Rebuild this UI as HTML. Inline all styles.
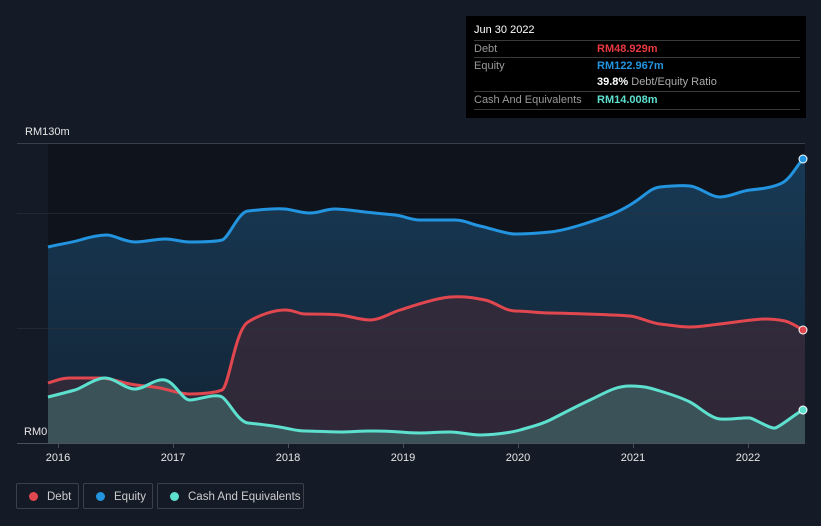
<!DOCTYPE html>
<html><head><style>
body{margin:0;background:#151b26;width:821px;height:526px;overflow:hidden;font-family:"Liberation Sans",sans-serif;position:relative}
.tt{position:absolute;left:466px;top:16px;width:340px;height:102px;background:#000;color:#fff;font-size:11px}
.tt .r{position:absolute;left:8px;width:326px;border-top:1px solid #3a3a3a;height:17px;line-height:17px;color:#999}
.tt .v{position:absolute;left:123px;font-weight:bold}
.lg{position:absolute;top:483px;height:26px;border:1px solid #3a404c;border-radius:2px;color:#ccc;font-size:11.5px;line-height:26px;box-sizing:border-box;white-space:nowrap;overflow:hidden}
.lg i{display:inline-block;width:9px;height:9px;border-radius:50%;margin:0 9px 0 12px;vertical-align:-1px}
</style></head><body>
<svg width="821" height="526" style="position:absolute;left:0;top:0">
<defs>
<linearGradient id="ge" x1="0" y1="0" x2="0" y2="1"><stop offset="0" stop-color="#1b4a6e" stop-opacity=".7"/><stop offset="1" stop-color="#163048" stop-opacity=".6"/></linearGradient>
</defs>
<rect x="48" y="143" width="757" height="300" fill="#0f141c"/>
<path d="M48,247 C60,244 70,243 80,240 S100,235 107,235 S125,242 135,242 S155,239 165,239 S180,242 190,242 S215,242 222,240 S238,212 248,211 S275,208 285,209 S300,213 310,213 S325,209 335,209 S355,211 365,212 S385,214 395,215 S410,220 420,220 S445,220 455,220 S470,224 480,226 S505,234 515,234 S540,233 550,232 S575,227 590,222 S615,214 630,205 S650,188 660,187 S680,185 690,186 S710,197 720,197 S740,191 750,190 S770,188 780,184 S795,168 803,159 L805,159 L805,443 L48,443Z" fill="url(#ge)"/>
<path d="M48,383 C58,380 62,378 70,378 S90,378 100,378 S120,382 130,384 S150,386 160,388 S180,394 190,394 S215,393 222,390 S235,330 248,322 S275,310 285,310 S298,314 305,314 S330,314 340,315 S360,320 370,320 S390,313 400,310 S435,298 450,297 S475,298 485,300 S505,311 515,311 S540,313 550,313 S620,315 630,316 S650,323 660,324 S680,327 690,327 S710,325 720,324 S755,319 765,319 S780,320 785,321 S798,327 803,330 L805,330 L805,443 L48,443Z" fill="#3a2a38" fill-opacity=".75"/>
<path d="M48,397 C60,394 68,392 75,390 S95,378 105,378 S125,389 135,389 S155,378 165,380 S182,400 190,400 S215,393 222,397 S238,422 248,423 S275,426 285,428 S298,431 305,431 S330,432 340,432 S360,431 370,431 S390,431 400,432 S412,433 420,433 S440,432 450,432 S470,435 480,435 S510,433 520,430 S540,425 550,420 S575,407 590,400 S615,386 630,386 S650,388 660,391 S682,398 690,402 S710,418 720,419 S745,417 750,418 S770,429 775,428 S795,414 803,410 L805,410 L805,443 L48,443Z" fill="#3d5a5e" fill-opacity=".85"/>
<line x1="17" y1="143.5" x2="805" y2="143.5" stroke="#3a404a"/>
<line x1="17" y1="213.5" x2="805" y2="213.5" stroke="#2a3340" stroke-opacity=".6"/>
<line x1="17" y1="328.5" x2="805" y2="328.5" stroke="#2a3340" stroke-opacity=".6"/>
<g fill="none" stroke-width="3">
<path stroke="#2394df" d="M48,247 C60,244 70,243 80,240 S100,235 107,235 S125,242 135,242 S155,239 165,239 S180,242 190,242 S215,242 222,240 S238,212 248,211 S275,208 285,209 S300,213 310,213 S325,209 335,209 S355,211 365,212 S385,214 395,215 S410,220 420,220 S445,220 455,220 S470,224 480,226 S505,234 515,234 S540,233 550,232 S575,227 590,222 S615,214 630,205 S650,188 660,187 S680,185 690,186 S710,197 720,197 S740,191 750,190 S770,188 780,184 S795,168 803,159"/>
<path stroke="#e0474f" d="M48,383 C58,380 62,378 70,378 S90,378 100,378 S120,382 130,384 S150,386 160,388 S180,394 190,394 S215,393 222,390 S235,330 248,322 S275,310 285,310 S298,314 305,314 S330,314 340,315 S360,320 370,320 S390,313 400,310 S435,298 450,297 S475,298 485,300 S505,311 515,311 S540,313 550,313 S620,315 630,316 S650,323 660,324 S680,327 690,327 S710,325 720,324 S755,319 765,319 S780,320 785,321 S798,327 803,330"/>
<path stroke="#5ee0cf" d="M48,397 C60,394 68,392 75,390 S95,378 105,378 S125,389 135,389 S155,378 165,380 S182,400 190,400 S215,393 222,397 S238,422 248,423 S275,426 285,428 S298,431 305,431 S330,432 340,432 S360,431 370,431 S390,431 400,432 S412,433 420,433 S440,432 450,432 S470,435 480,435 S510,433 520,430 S540,425 550,420 S575,407 590,400 S615,386 630,386 S650,388 660,391 S682,398 690,402 S710,418 720,419 S745,417 750,418 S770,429 775,428 S795,414 803,410"/>
</g>
<circle cx="803" cy="159" r="4" fill="#2394df" stroke="#fff"/>
<circle cx="803" cy="330" r="4" fill="#e0474f" stroke="#fff"/>
<circle cx="803" cy="410" r="4" fill="#5ee0cf" stroke="#fff"/>
<line x1="17" y1="443.5" x2="805" y2="443.5" stroke="#4a515c"/>
<g stroke="#4a515c"><line x1="58.5" y1="443" x2="58.5" y2="448"/><line x1="173.5" y1="443" x2="173.5" y2="448"/><line x1="288.5" y1="443" x2="288.5" y2="448"/><line x1="403.5" y1="443" x2="403.5" y2="448"/><line x1="518.5" y1="443" x2="518.5" y2="448"/><line x1="633.5" y1="443" x2="633.5" y2="448"/><line x1="748.5" y1="443" x2="748.5" y2="448"/></g>
<g fill="#e6e6e6" font-size="11" text-anchor="middle" font-family="Liberation Sans,sans-serif">
<text x="58" y="461">2016</text><text x="173" y="461">2017</text><text x="288" y="461">2018</text><text x="403" y="461">2019</text><text x="518" y="461">2020</text><text x="633" y="461">2021</text><text x="748" y="461">2022</text>
<text x="25" y="135" text-anchor="start">RM130m</text>
<text x="24" y="435" text-anchor="start">RM0</text>
</g>
</svg>
<div class="tt">
<div style="position:absolute;left:8px;top:8px;font-size:11px">Jun 30 2022</div>
<div class="r" style="top:24px">Debt<span class="v" style="color:#e8393f">RM48.929m</span></div>
<div class="r" style="top:41px">Equity<span class="v" style="color:#2394df">RM122.967m</span></div>
<div class="r" style="top:58px;border-top:none"><span class="v" style="color:#fff">39.8% <span style="color:#aaa;font-weight:normal">Debt/Equity Ratio</span></span></div>
<div class="r" style="top:75px">Cash And Equivalents<span class="v" style="color:#5ee0cf">RM14.008m</span></div>
<div class="r" style="top:93px;height:0"></div>
</div>
<div class="lg" style="left:16px;width:63px"><i style="background:#e0474f"></i>Debt</div>
<div class="lg" style="left:83px;width:70px"><i style="background:#2394df"></i>Equity</div>
<div class="lg" style="left:157px;width:147px"><i style="background:#5ee0cf"></i>Cash And Equivalents</div>
</body></html>
